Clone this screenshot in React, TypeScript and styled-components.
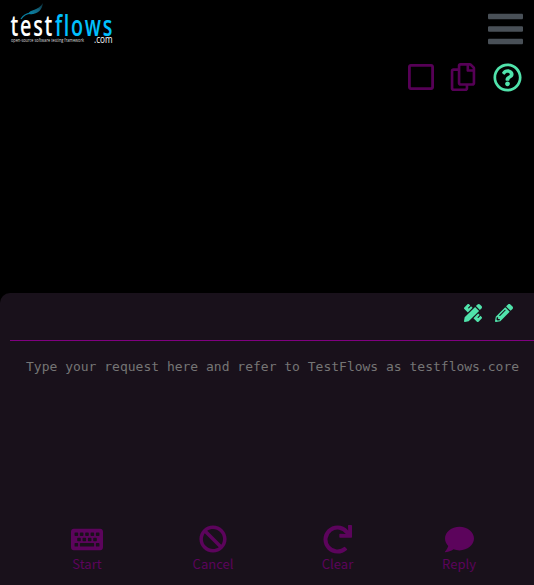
import React from "react";
import styled, { createGlobalStyle } from "styled-components";
import {
  FaBars, FaRegSquare, FaRegCopy, FaRegQuestionCircle, FaPencilRuler,
  FaPencilAlt, FaKeyboard, FaBan, FaRedo, FaComment,
} from "react-icons/fa";

const GlobalStyle = createGlobalStyle`
  * { box-sizing: border-box; }
  html, body { margin: 0; background: #000; overflow: hidden; }
  svg { display: block; flex: none; }
`;
const Page = styled.div`
  width: 534px;
  height: 585px;
  display: flex;
  flex-direction: column;
  background: #000;
`;
const Header = styled.header`
  height: 57px;
  display: flex;
  justify-content: space-between;
  padding: 0 11px 0 8px;
`;
const Logo = styled.svg`
  width: 110px;
  height: 50px;
  overflow: visible;
  font-family: "Open Sans", sans-serif;
`;
const Wordmark = styled.text`
  font-size: 29px;
  font-weight: 600;
  letter-spacing: 2.5px;
`;
const MenuButton = styled.div`
  padding-top: 9px;
  height: 49px;
  color: #495057;
  svg { width: 35px; height: 40px; }
`;
const OutputTools = styled.div`
  height: 236px;
  display: flex;
  justify-content: flex-end;
  padding: 6px 12px 0 0;
`;
const Tool = styled.div<{ $active?: boolean; $gap: number; $w: number; $h: number }>`
  display: flex;
  align-items: center;
  height: 28px;
  margin-left: ${p => p.$gap}px;
  color: ${p => (p.$active ? "#50e3ab" : "#560056")};
  svg { width: ${p => p.$w}px; height: ${p => p.$h}px; }
`;
const Composer = styled.section`
  height: 292px;
  flex: none;
  display: flex;
  flex-direction: column;
  padding-left: 10px;
  background: #19111b;
  border-top-left-radius: 10px;
`;
const EditorBar = styled.div`
  height: 48px;
  display: flex;
  justify-content: flex-end;
  padding: 11px 21px 0 0;
  gap: 13px;
  font-size: 18px;
  color: #50e3ab;
  border-bottom: 1px solid #800080;
`;
const Prompt = styled.div`
  height: 181px;
  padding: 17px 0 0 16px;
  font: 13px/18px "DejaVu Sans Mono", monospace;
  color: #757575;
  white-space: nowrap;
`;
const Actions = styled.div`
  display: flex;
  padding-left: 14px;
`;
const Action = styled.div<{ $w: number; $size: number; $iw: number }>`
  width: ${p => p.$w}px;
  display: flex;
  flex-direction: column;
  align-items: center;
  color: #5c045c;
  font: 13px/16px "Noto Sans CJK SC", sans-serif;
  svg { width: ${p => p.$iw}px; height: ${p => p.$size}px; }
`;
const IconSlot = styled.div`
  height: 34px;
  display: flex;
  align-items: center;
`;

const TestFlowsLogo = () => (
  <Logo viewBox="0 0 110 50">
    <defs>
      <linearGradient id="leaf" x1="0" y1="1" x2="1" y2="0">
        <stop offset="0" stopColor="#0788ad" />
        <stop offset=".55" stopColor="#12637c" />
        <stop offset="1" stopColor="#08222b" />
      </linearGradient>
    </defs>
    <Wordmark x="2.5" y="36" fill="#fff" textLength="43.5" lengthAdjust="spacingAndGlyphs">test</Wordmark>
    <Wordmark x="47" y="36" fill="#00c0ff" textLength="59" lengthAdjust="spacingAndGlyphs">flows</Wordmark>
    <text x="3" y="42" fontSize="4.5" fontWeight="500" fill="#ddd" textLength="73" lengthAdjust="spacingAndGlyphs">open-source software testing framework</text>
    <text x="86" y="43" fontSize="10" fill="#fff" textLength="18.5" lengthAdjust="spacingAndGlyphs">.com</text>
    <path d="M20 14C22 9 30 11 35 3C34 10 30 15 20 14Z" fill="url(#leaf)" />
    <path d="M13 19Q17 13 24 13.5" fill="none" stroke="#087c9e" strokeWidth="1.3" />
  </Logo>
);

const actions = [
  { label: "Start", icon: <FaKeyboard />, width: 126, iconWidth: 32, size: 29 },
  { label: "Cancel", icon: <FaBan />, width: 126, iconWidth: 28, size: 28 },
  { label: "Clear", icon: <FaRedo />, width: 123, iconWidth: 29, size: 29 },
  { label: "Reply", icon: <FaComment />, width: 120, iconWidth: 29, size: 29 },
];

export default function App() {
  return (
    <Page>
      <GlobalStyle />
      <Header>
        <TestFlowsLogo />
        <MenuButton><FaBars /></MenuButton>
      </Header>
      <OutputTools>
        <Tool $gap={0} $w={26} $h={30}><FaRegSquare /></Tool>
        <Tool $gap={16} $w={26} $h={28}><FaRegCopy /></Tool>
        <Tool $active $gap={17} $w={29} $h={29}><FaRegQuestionCircle /></Tool>
      </OutputTools>
      <Composer>
        <EditorBar><FaPencilRuler /><FaPencilAlt /></EditorBar>
        <Prompt>Type your request here and refer to TestFlows as testflows.core</Prompt>
        <Actions>
          {actions.map(a => (
            <Action key={a.label} $w={a.width} $size={a.size} $iw={a.iconWidth}>
              <IconSlot>{a.icon}</IconSlot>
              {a.label}
            </Action>
          ))}
        </Actions>
      </Composer>
    </Page>
  );
}
